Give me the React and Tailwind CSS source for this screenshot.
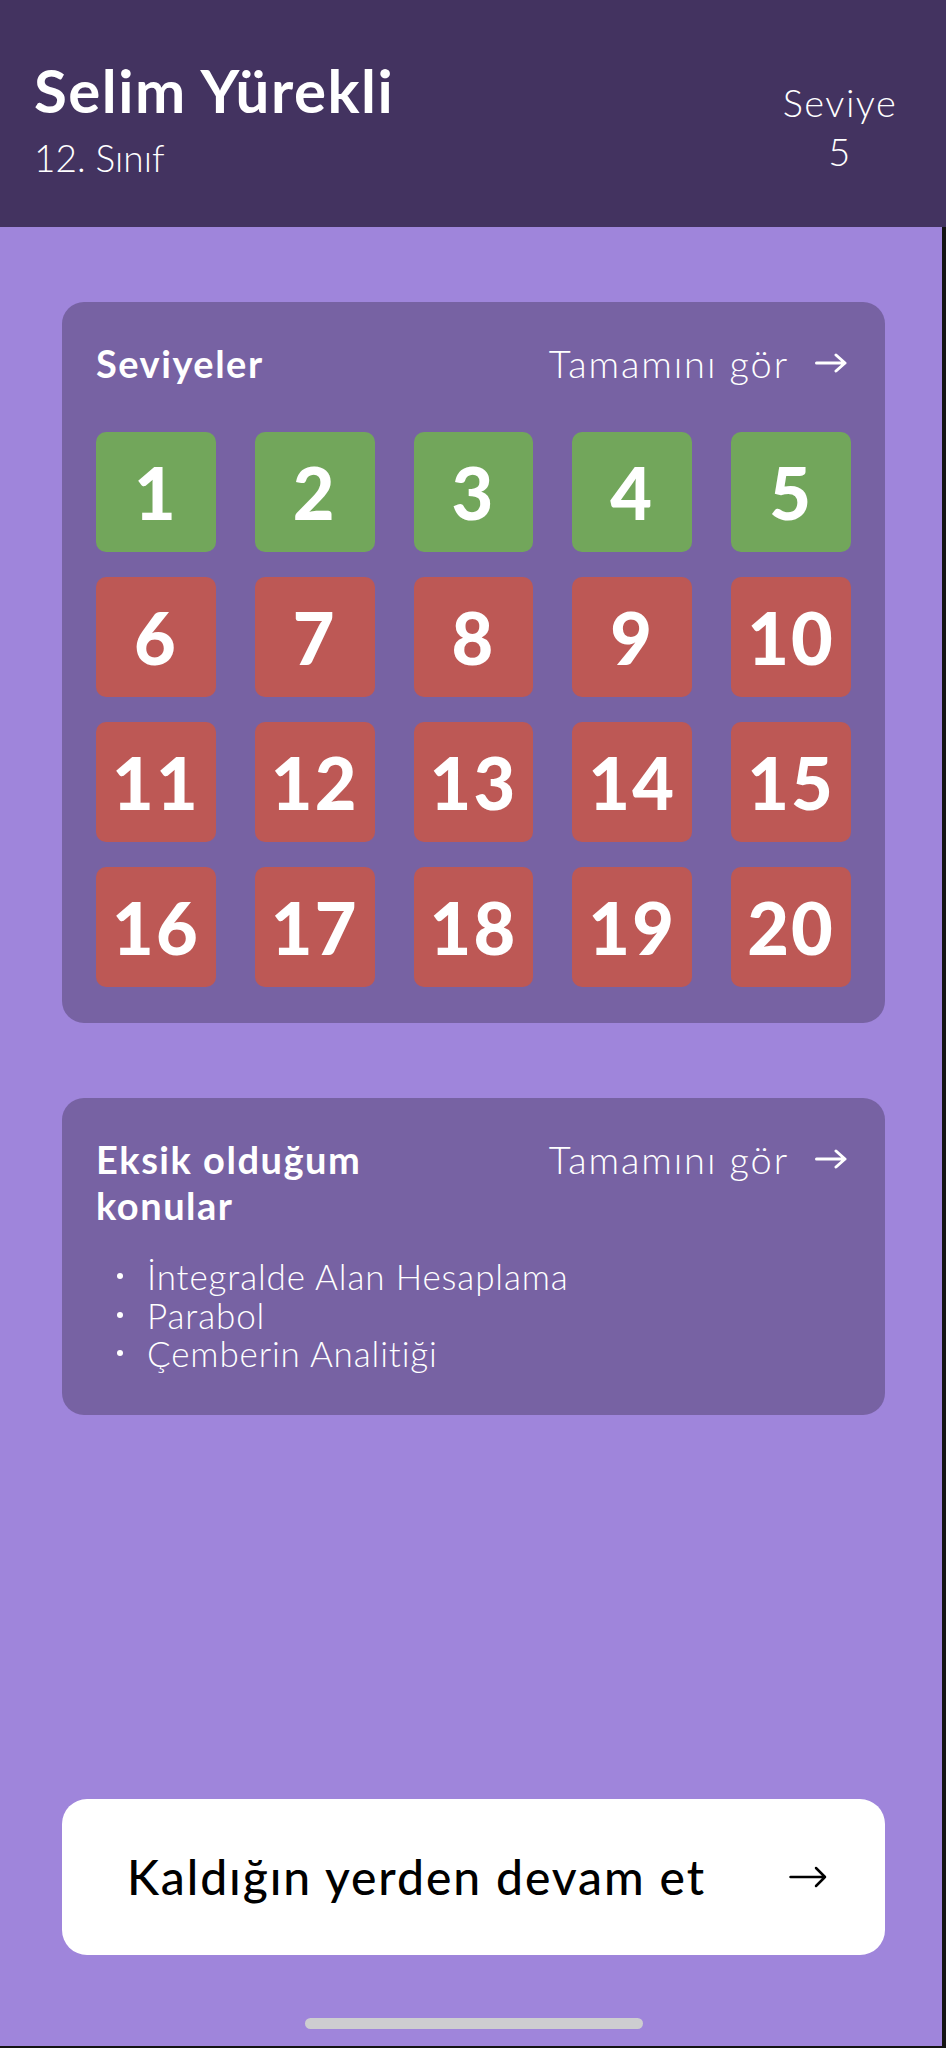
import React from 'react';

const levels = Array.from({ length: 20 }, (_, i) => i + 1);
const currentLevel = 5;
const missingTopics = ['İntegralde Alan Hesaplama', 'Parabol', 'Çemberin Analitiği'];

const Arrow = ({ width, height, strokeWidth, color }) => (
  <svg width={width} height={height} viewBox={`0 0 ${width} ${height}`} fill="none">
    <path
      d={`M1.5 ${height / 2} H${width - 2} M${width - 11} 2 L${width - 2} ${height / 2} L${width - 11} ${height - 2}`}
      stroke={color}
      strokeWidth={strokeWidth}
      strokeLinecap="round"
      strokeLinejoin="round"
    />
  </svg>
);

const SeeAll = () => (
  <button className="flex items-center gap-[26px] pr-[4px] text-[38px] leading-[46px] tracking-[0.05em] font-light text-white">
    <span>Tamamını gör</span>
    <Arrow width={32} height={20} strokeWidth={3} color="#ffffff" />
  </button>
);

export default function App() {
  return (
    <div className="h-[2048px] flex flex-col bg-[#9f85db] font-['Lato',sans-serif]">
      {/* Header */}
      <header className="h-[227px] shrink-0 bg-[#433360] flex justify-between pl-[34px] pr-[44px] text-white">
        <div className="pt-[60px]">
          <h1 className="text-[60px] leading-[60px] tracking-[0.025em] font-bold">Selim Yürekli</h1>
          <p className="mt-[19px] text-[37px] leading-[37px] font-light">12. Sınıf</p>
        </div>
        <div className="pt-[78px] w-[124px] text-center text-[38px] leading-[49px] tracking-[0.04em] font-light">
          <p>Seviye</p>
          <p>{currentLevel}</p>
        </div>
      </header>

      <main className="flex-1 flex flex-col pl-[62px] pr-[57px] border-r-4 border-b-2 border-[#141414]">
        {/* Levels */}
        <section className="mt-[75px] rounded-[22px] bg-[#7762a3] pt-[38px] px-[34px] pb-[36px]">
          <div className="flex items-start justify-between">
            <h2 className="text-[38px] leading-[46px] tracking-[0.04em] font-bold text-white">Seviyeler</h2>
            <SeeAll />
          </div>
          <div className="mt-[46px] grid grid-cols-5 gap-x-[39px] gap-y-[25px]">
            {levels.map(level => (
              <div
                key={level}
                className={`h-[120px] rounded-[10px] flex items-center justify-center text-[72px] leading-none tracking-[0.03em] font-black text-white ${
                  level <= currentLevel ? 'bg-[#72a65b]' : 'bg-[#bd5855]'
                }`}
              >
                {level}
              </div>
            ))}
          </div>
        </section>

        {/* Missing topics */}
        <section className="mt-[75px] rounded-[22px] bg-[#7762a3] pt-[38px] px-[34px] pb-[42px]">
          <div className="flex items-start justify-between">
            <h2 className="w-[300px] text-[38px] leading-[46px] tracking-[0.04em] font-bold text-white">Eksik olduğum konular</h2>
            <SeeAll />
          </div>
          <ul className="mt-[29px] pl-[21px]">
            {missingTopics.map(topic => (
              <li key={topic} className="flex items-center gap-[24px] text-[35px] leading-[38.5px] tracking-[0.025em] font-light text-white">
                <span className="w-[6px] h-[6px] rounded-full bg-white shrink-0"></span>
                {topic}
              </li>
            ))}
          </ul>
        </section>

        {/* Continue */}
        <button className="mt-auto h-[156px] shrink-0 rounded-[25px] bg-white flex items-center justify-between pl-[65px] pr-[58px] text-[48px] tracking-[0.04em] font-medium text-black">
          <span>Kaldığın yerden devam et</span>
          <Arrow width={38} height={22} strokeWidth={2.5} color="#000000" />
        </button>

        <div className="h-[91px] shrink-0 flex justify-center pt-[63px]">
          <div className="w-[338px] h-[11px] rounded-full bg-[#cdcdd0]"></div>
        </div>
      </main>
    </div>
  );
}
